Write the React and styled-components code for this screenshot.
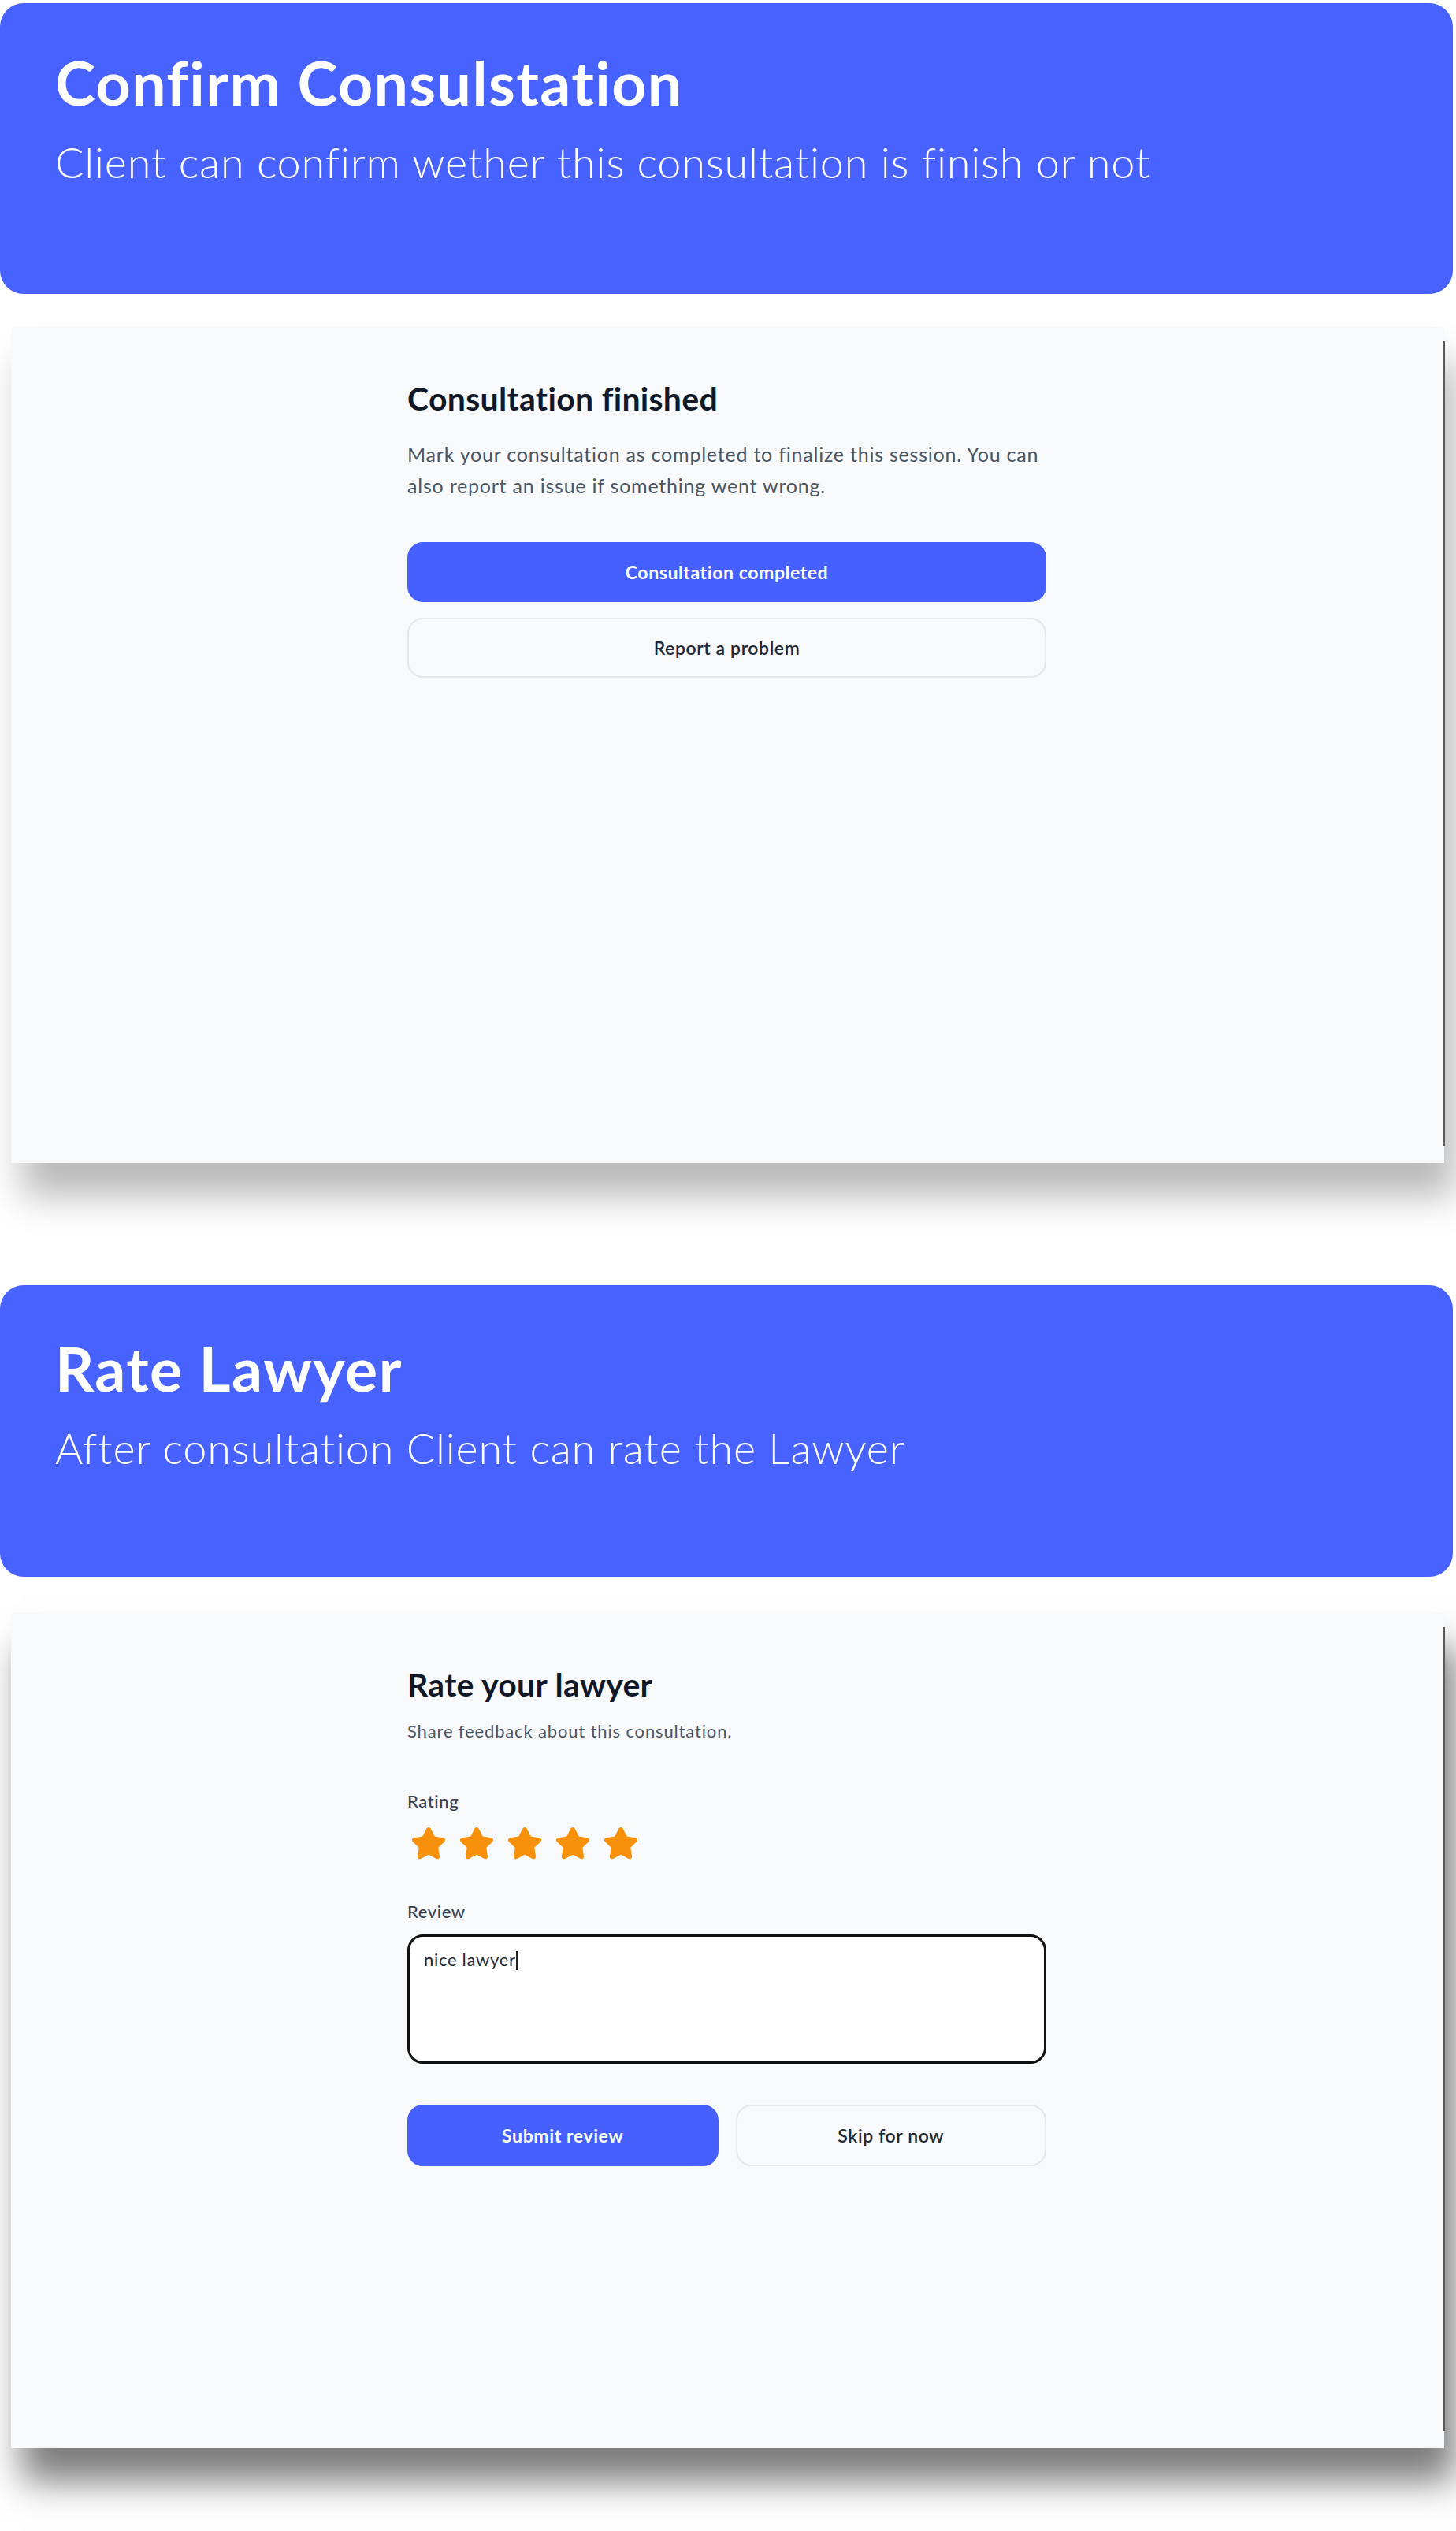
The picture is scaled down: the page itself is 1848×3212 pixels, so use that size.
import React from 'react';
import styled, { createGlobalStyle } from 'styled-components';
import { Star } from 'lucide-react';

const GlobalStyle = createGlobalStyle`
  body {
    margin: 0;
    background: #ffffff;
    font-family: Lato, "Noto Sans", sans-serif;
    -webkit-font-smoothing: antialiased;
  }
`;

const Page = styled.main`
  width: 1848px;
  padding: 4px 0 105px;
`;

// Blue intro banners
const Banner = styled.section`
  box-sizing: border-box;
  width: 1844px;
  height: ${p => p.$height}px;
  margin-top: ${p => p.$gap}px;
  padding: ${p => p.$pad}px 0 0 70px;
  background: #4762ff;
  border-radius: 30px;
  color: #ffffff;
`;

const BannerTitle = styled.h1`
  margin: 0;
  font-size: 77px;
  line-height: 90px;
  font-weight: 700;
  letter-spacing: 1.4px;
`;

const BannerText = styled.p`
  margin: 24px 0 0;
  font-size: 54px;
  line-height: 65px;
  font-weight: 300;
  letter-spacing: 0.8px;
`;

// Screen preview panels
const Panel = styled.section`
  position: relative;
  box-sizing: border-box;
  width: 1819px;
  height: ${p => p.$height}px;
  margin: ${p => p.$gap}px 0 0 14px;
  padding-top: 67px;
  background: #f8f9fb;
  box-shadow: 14px 42px 44px rgba(0, 0, 0, ${p => p.$shade});

  &::after {
    content: '';
    position: absolute;
    top: 18px;
    bottom: 22px;
    right: -1px;
    width: 2px;
    background: #5a5a5a;
  }
`;

const Column = styled.div`
  width: 811px;
  margin: 0 auto;
  transform: translateX(-1px);
`;

const Heading = styled.h2`
  margin: 0;
  font-size: 41px;
  line-height: 48px;
  font-weight: 700;
  color: #111827;
  letter-spacing: 0.3px;
`;

const Lead = styled.p`
  margin: ${p => p.$gap}px 0 0;
  font-size: ${p => p.$size}px;
  line-height: ${p => p.$line}px;
  letter-spacing: ${p => p.$track}px;
  color: #4b5563;
`;

const Label = styled.div`
  margin-top: ${p => p.$gap}px;
  font-size: 22px;
  line-height: 33px;
  font-weight: 500;
  letter-spacing: 0.6px;
  color: #374151;
`;

const Stack = styled.div`
  display: flex;
  flex-direction: column;
  gap: 20px;
  margin-top: 52px;
`;

const Actions = styled.div`
  display: grid;
  grid-template-columns: 1fr 1fr;
  gap: 22px;
  margin-top: 52px;
`;

const Button = styled.button`
  box-sizing: border-box;
  height: ${p => p.$height}px;
  border-radius: 20px;
  font-family: inherit;
  font-size: 23px;
  letter-spacing: 0.6px;
  font-weight: ${p => (p.$primary ? 700 : 600)};
  cursor: pointer;
  border: 2px solid ${p => (p.$primary ? '#4660ff' : '#e5e7eb')};
  background: ${p => (p.$primary ? '#4660ff' : '#f8f9fb')};
  color: ${p => (p.$primary ? '#ffffff' : '#1f2937')};
`;

const StarRow = styled.div`
  display: flex;
  gap: 15px;
  margin-top: 15px;
  padding-left: 4px;
  color: #f7900a;

  svg {
    display: block;
  }
`;

const Field = styled.div`
  box-sizing: border-box;
  height: 164px;
  margin-top: 13px;
  padding: 12px 18px;
  background: #ffffff;
  border: 3px solid #111111;
  border-radius: 20px;
  font-size: 22px;
  line-height: 33px;
  letter-spacing: 0.7px;
  color: #1f2937;
`;

const Caret = styled.span`
  display: inline-block;
  width: 2px;
  height: 24px;
  vertical-align: -5px;
  background: #222;
`;

const ConfirmScreen = () => (
  <Panel $height={1061} $gap={42} $shade={0.28}>
    <Column>
      <Heading>Consultation finished</Heading>
      <Lead $gap={26} $size={25} $line={40} $track={0.78}>
        Mark your consultation as completed to finalize this session. You can
        also report an issue if something went wrong.
      </Lead>
      <Stack>
        <Button $primary $height={76}>Consultation completed</Button>
        <Button $height={76}>Report a problem</Button>
      </Stack>
    </Column>
  </Panel>
);

const RatingScreen = () => (
  <Panel $height={1060} $gap={46} $shade={0.52}>
    <Column>
      <Heading>Rate your lawyer</Heading>
      <Lead $gap={18} $size={22} $line={33} $track={0.85}>
        Share feedback about this consultation.
      </Lead>
      <Label $gap={56}>Rating</Label>
      <StarRow>
        {[1, 2, 3, 4, 5].map(n => (
          <Star key={n} size={46} fill="currentColor" strokeWidth={2} />
        ))}
      </StarRow>
      <Label $gap={46}>Review</Label>
      <Field>
        nice lawyer<Caret />
      </Field>
      <Actions>
        <Button $primary $height={78}>Submit review</Button>
        <Button $height={78}>Skip for now</Button>
      </Actions>
    </Column>
  </Panel>
);

const App = () => (
  <>
    <GlobalStyle />
    <Page>
      <Banner $height={369} $gap={0} $pad={55}>
        <BannerTitle>Confirm Consulstation</BannerTitle>
        <BannerText>Client can confirm wether this consultation is finish or not</BannerText>
      </Banner>
      <ConfirmScreen />
      <Banner $height={370} $gap={155} $pad={60}>
        <BannerTitle>Rate Lawyer</BannerTitle>
        <BannerText>After consultation Client can rate the Lawyer</BannerText>
      </Banner>
      <RatingScreen />
    </Page>
  </>
);

export default App;
